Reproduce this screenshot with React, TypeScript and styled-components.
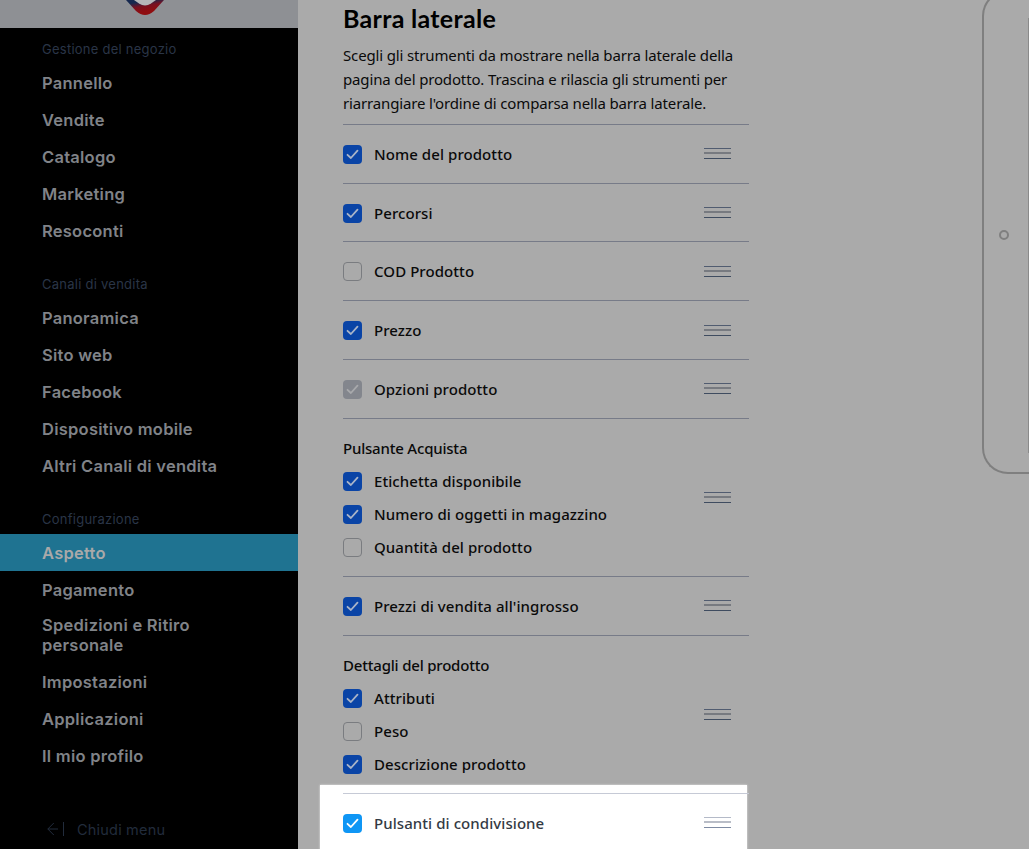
import React, { FC } from 'react';
import styled, { createGlobalStyle } from 'styled-components';

const GlobalStyle = createGlobalStyle`
  html, body {
    margin: 0;
    padding: 0;
    height: 100%;
    overflow: hidden;
    background: #aaaaaa;
  }
`;

const Page = styled.div`
  display: flex;
  width: 1029px;
  height: 849px;
  overflow: hidden;
`;

const Sidebar = styled.aside`
  flex: 0 0 298px;
  display: flex;
  flex-direction: column;
  background: #000;
  font-family: 'Inter', 'Liberation Sans', sans-serif;
`;

const LogoBar = styled.div`
  flex: 0 0 28px;
  background: #8e9094;
  display: flex;
  justify-content: center;
  align-items: flex-start;
  overflow: hidden;
  padding-right: 6px;
`;

const GroupTitle = styled.div<{ $top: number }>`
  padding: 0 42px;
  height: 17px;
  line-height: 17px;
  font-size: 13px;
  letter-spacing: 0.25px;
  color: #2a3547;
  margin-top: ${(p) => p.$top}px;
  margin-bottom: 6px;
`;

const NavItem = styled.div<{ $active?: boolean; $wrapped?: boolean }>`
  padding: ${(p) => (p.$wrapped ? '7px 42px 8px' : '9px 42px 8px')};
  box-sizing: border-box;
  font-size: 16.5px;
  line-height: 20px;
  font-weight: 600;
  letter-spacing: 0.25px;
  color: ${(p) => (p.$active ? '#a9a9a9' : '#808388')};
  background: ${(p) => (p.$active ? '#1f7391' : 'transparent')};
`;

const CloseMenu = styled.div`
  display: flex;
  align-items: center;
  gap: 12px;
  padding-left: 47px;
  margin-top: 45px;
  height: 20px;
  font-size: 14.5px;
  letter-spacing: 0.2px;
  color: #222c3c;
`;

const Main = styled.main`
  flex: 1;
  display: flex;
  min-width: 0;
  background: #aaaaaa;
`;

const Settings = styled.section`
  flex: 0 0 406px;
  margin-left: 45px;
  font-family: 'Noto Sans', 'Open Sans', sans-serif;
`;

const Heading = styled.h2`
  margin: 2px 0 0;
  height: 32px;
  line-height: 32px;
  font-family: 'Lato', 'Liberation Sans', sans-serif;
  font-size: 25px;
  font-weight: 700;
  letter-spacing: 0.3px;
  color: #000;
`;

const Intro = styled.p`
  margin: 9px 0 9px;
  font-size: 15px;
  line-height: 24px;
  color: #0a0a0a;
  letter-spacing: -0.15px;
  white-space: nowrap;
`;

const Row = styled.div`
  display: flex;
  align-items: center;
  justify-content: space-between;
  border-top: 1px solid #777b88;
  height: 58.72px;
  box-sizing: border-box;
`;

const TallRow = styled(Row)`
  height: 158.4px;
`;

const Stack = styled.div`
  display: flex;
  flex-direction: column;
  gap: 9px;
  align-self: flex-start;
  margin-top: 19px;
`;

const SubTitle = styled.div`
  font-size: 15px;
  line-height: 22px;
  font-weight: 500;
  color: #0a0a0a;
  letter-spacing: -0.2px;
  margin: -1px 0 1px;
`;

const CheckRow = styled.label`
  display: flex;
  align-items: center;
  gap: 12px;
  height: 24px;
  font-size: 15px;
  font-weight: 500;
  letter-spacing: 0.07px;
  color: #0a0a0a;
`;

const HighlightWrap = styled.div`
  margin: -8px 2px 0 -23px;
  padding: 8px 0 0 23px;
  background: #fff;
  box-shadow: 0 0 2px rgba(255, 255, 255, 0.7);
  height: 70px;
`;

const HighlightRow = styled(Row)`
  border-top-color: #c6cad6;
  margin-right: -2px;

  ${CheckRow} {
    color: #333a44;
  }
`;

type BoxState = 'on' | 'off' | 'locked' | 'bright';

const boxColors: Record<BoxState, string> = {
  on: '#0a44a6',
  off: 'transparent',
  locked: '#83868d',
  bright: '#0f96f5',
};

const Box = styled.span<{ $state: BoxState }>`
  flex: 0 0 19px;
  width: 19px;
  height: 19px;
  margin-top: 1px;
  box-sizing: border-box;
  border-radius: 4px;
  display: inline-flex;
  align-items: center;
  justify-content: center;
  background: ${(p) => boxColors[p.$state]};
  border: ${(p) => (p.$state === 'off' ? '1px solid #7a7c80' : 'none')};
`;

const Handle = styled.span<{ $light?: boolean }>`
  flex: 0 0 27px;
  width: 27px;
  height: 11px;
  margin-right: 18px;
  box-sizing: border-box;
  border-top: 1px solid ${(p) => (p.$light ? '#b4bac8' : '#515c70')};
  border-bottom: 1px solid ${(p) => (p.$light ? '#7f8ba3' : '#3f4c60')};
  position: relative;

  &::after {
    content: '';
    position: absolute;
    left: 0;
    right: 0;
    top: 3px;
    height: 2px;
    background: ${(p) => (p.$light ? '#b9bdc7' : '#777a80')};
  }
`;

const Preview = styled.div`
  margin-left: 233px;
  margin-top: -10px;
  flex: 0 0 47px;
  height: 484px;
  box-sizing: border-box;
  border: 2px solid #7f7f7f;
  border-right: none;
  border-radius: 26px 0 0 26px;
  display: flex;
  align-items: center;
  padding: 6px 0 0 15px;
`;

const HomeDot = styled.span`
  width: 10px;
  height: 10px;
  box-sizing: border-box;
  border: 2px solid #7f7f7f;
  border-radius: 50%;
`;

const ScreenEdge = styled.span`
  margin-left: auto;
  width: 1px;
  height: 435px;
  background: #8a8a8a;
`;

const Tick: FC<{ color: string }> = ({ color }) => (
  <svg width="13" height="11" viewBox="0 0 13 11" fill="none">
    <path d="M1.5 5.8 L4.9 9 L11.5 1.6" stroke={color} strokeWidth="1.8" strokeLinecap="round" strokeLinejoin="round" />
  </svg>
);

const tickColors: Record<BoxState, string | null> = {
  on: '#a9b4c8',
  off: null,
  locked: '#a8a9ac',
  bright: '#ffffff',
};

const Check: FC<{ label: string; state?: BoxState }> = ({ label, state = 'on' }) => {
  const tick = tickColors[state];
  return (
    <CheckRow>
      <Box $state={state}>{tick && <Tick color={tick} />}</Box>
      {label}
    </CheckRow>
  );
};

const Logo: FC = () => (
  <svg width="40" height="16" viewBox="0 0 40 16" fill="none">
    <defs>
      <linearGradient id="logoEdge" x1="0.1" y1="0" x2="0.45" y2="0.8">
        <stop offset="0.25" stopColor="#16284f" />
        <stop offset="0.6" stopColor="#7a1020" />
        <stop offset="1" stopColor="#8f0d10" />
      </linearGradient>
    </defs>
    <path d="M0 0 L10 11 Q19 19 28 11 L38 0 Z" fill="url(#logoEdge)" />
    <path d="M8 0 L13 3.6 Q19 7.5 25 3.6 L30 0 Z" fill="#b5b7ba" />
  </svg>
);

const CollapseIcon: FC = () => (
  <svg width="18" height="16" viewBox="0 0 18 16" fill="none" stroke="#222c3c" strokeWidth="1">
    <path d="M11 8 H0.8 M6.8 2 L0.8 8 L6.8 14" />
    <path d="M16.5 1 V15" />
  </svg>
);

const App: FC = () => (
  <Page>
    <GlobalStyle />
    <Sidebar>
      <LogoBar>
        <Logo />
      </LogoBar>
      <GroupTitle $top={13}>Gestione del negozio</GroupTitle>
      <NavItem>Pannello</NavItem>
      <NavItem>Vendite</NavItem>
      <NavItem>Catalogo</NavItem>
      <NavItem>Marketing</NavItem>
      <NavItem>Resoconti</NavItem>
      <GroupTitle $top={27}>Canali di vendita</GroupTitle>
      <NavItem>Panoramica</NavItem>
      <NavItem>Sito web</NavItem>
      <NavItem>Facebook</NavItem>
      <NavItem>Dispositivo mobile</NavItem>
      <NavItem>Altri Canali di vendita</NavItem>
      <GroupTitle $top={27}>Configurazione</GroupTitle>
      <NavItem $active>Aspetto</NavItem>
      <NavItem>Pagamento</NavItem>
      <NavItem $wrapped>
        Spedizioni e Ritiro
        <br />
        personale
      </NavItem>
      <NavItem>Impostazioni</NavItem>
      <NavItem>Applicazioni</NavItem>
      <NavItem>Il mio profilo</NavItem>
      <CloseMenu>
        <CollapseIcon />
        Chiudi menu
      </CloseMenu>
    </Sidebar>
    <Main>
      <Settings>
        <Heading>Barra laterale</Heading>
        <Intro>
          Scegli gli strumenti da mostrare nella barra laterale della
          <br />
          pagina del prodotto. Trascina e rilascia gli strumenti per
          <br />
          riarrangiare l'ordine di comparsa nella barra laterale.
        </Intro>
        <Row>
          <Check label="Nome del prodotto" />
          <Handle />
        </Row>
        <Row>
          <Check label="Percorsi" />
          <Handle />
        </Row>
        <Row>
          <Check label="COD Prodotto" state="off" />
          <Handle />
        </Row>
        <Row>
          <Check label="Prezzo" />
          <Handle />
        </Row>
        <Row>
          <Check label="Opzioni prodotto" state="locked" />
          <Handle />
        </Row>
        <TallRow>
          <Stack>
            <SubTitle>Pulsante Acquista</SubTitle>
            <Check label="Etichetta disponibile" />
            <Check label="Numero di oggetti in magazzino" />
            <Check label="Quantità del prodotto" state="off" />
          </Stack>
          <Handle />
        </TallRow>
        <Row>
          <Check label="Prezzi di vendita all'ingrosso" />
          <Handle />
        </Row>
        <TallRow>
          <Stack>
            <SubTitle>Dettagli del prodotto</SubTitle>
            <Check label="Attributi" />
            <Check label="Peso" state="off" />
            <Check label="Descrizione prodotto" />
          </Stack>
          <Handle />
        </TallRow>
        <HighlightWrap>
          <HighlightRow>
            <Check label="Pulsanti di condivisione" state="bright" />
            <Handle $light />
          </HighlightRow>
        </HighlightWrap>
      </Settings>
      <Preview>
        <HomeDot />
        <ScreenEdge />
      </Preview>
    </Main>
  </Page>
);

export default App;
